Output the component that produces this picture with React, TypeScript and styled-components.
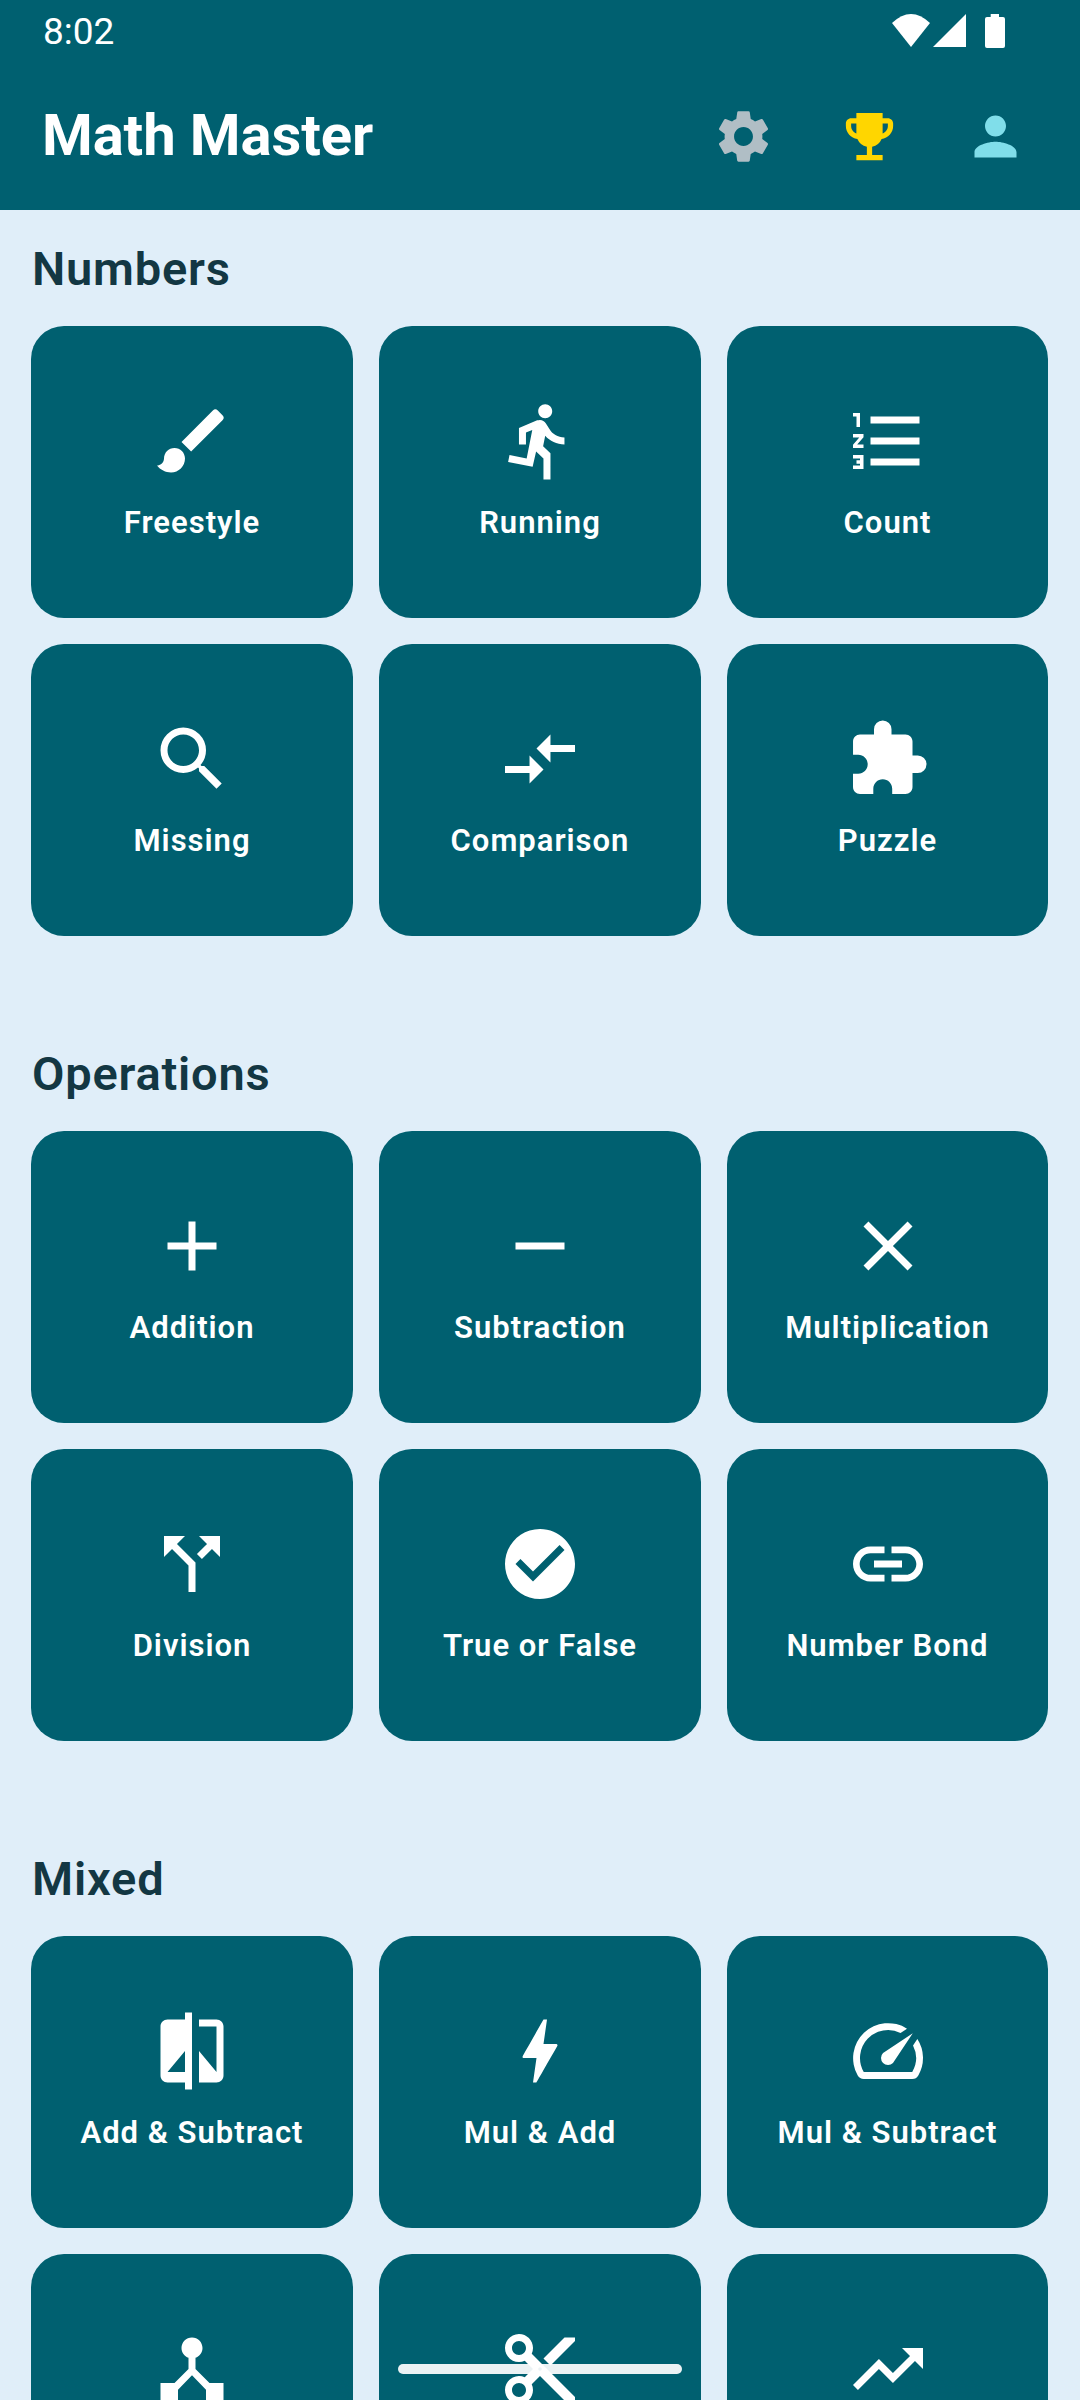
import React from "react";
import styled, { createGlobalStyle } from "styled-components";
import {
  MdBrush, MdDirectionsRun, MdFormatListNumbered, MdSearch, MdCompareArrows, MdExtension,
  MdAdd, MdRemove, MdClose, MdCallSplit, MdCheckCircle, MdLink, MdCompare, MdBolt, MdSpeed,
  MdDeviceHub, MdContentCut, MdTrendingUp, MdSettings, MdEmojiEvents, MdPerson,
} from "react-icons/md";
import type { IconType } from "react-icons";

const Global = createGlobalStyle`
  html, body { margin: 0; padding: 0; background: #e0eef9; }
  #root { height: 2400px; overflow: hidden; }
  * { box-sizing: border-box; }
`;

const Page = styled.div`
  width: 1080px;
  height: 2400px;
  overflow: hidden;
  background: #e0eef9;
  font-family: Roboto, "Liberation Sans", sans-serif;
`;

const Header = styled.header`
  background: #006070;
  height: 210px;
  display: flex;
  flex-direction: column;
`;

const StatusBar = styled.div`
  height: 63px;
  display: flex;
  align-items: center;
  justify-content: space-between;
  padding: 0 73px 1px 43px;
  color: #fff;
`;

const Time = styled.span`
  font-size: 37px;
  font-weight: 400;
`;

const StatusIcons = styled.svg`
  width: 117px;
  height: 36px;
  fill: #fff;
  display: block;
`;

const Toolbar = styled.div`
  flex: 1;
  display: flex;
  align-items: center;
  justify-content: space-between;
  padding: 0 21.5px 3px 42px;
`;

const AppTitle = styled.h1`
  margin: 0;
  color: #fff;
  font-size: 58px;
  font-weight: 700;
  line-height: 1;
  letter-spacing: -0.1px;
`;

const Actions = styled.div`
  display: flex;
  margin-top: 3px;
`;

const ActionButton = styled.span<{ $color: string }>`
  width: 126px;
  height: 126px;
  display: flex;
  align-items: center;
  justify-content: center;
  color: ${(p) => p.$color};
  font-size: 63px;
`;

const Main = styled.main`
  padding: 0 32px 0 31px;
`;

const Section = styled.section`
  margin-bottom: 79px;
`;

const SectionTitle = styled.h2`
  margin: 0;
  padding: 32px 1px 30px;
  height: 116px;
  font-size: 47px;
  line-height: 54px;
  font-weight: 600;
  letter-spacing: 0.8px;
  color: #133743;
`;

const Grid = styled.div`
  display: grid;
  grid-template-columns: 322px 322px 321px;
  gap: 26px;
`;

const Card = styled.div`
  height: 292px;
  padding-top: 3px;
  border-radius: 33px;
  background: #006070;
  color: #fff;
  display: flex;
  flex-direction: column;
  align-items: center;
  justify-content: center;
  gap: 14px;
`;

const IconWrap = styled.div`
  position: relative;
  width: 84px;
  height: 84px;
  font-size: 84px;
  display: flex;
  align-items: center;
  justify-content: center;
`;

const Strike = styled.span`
  position: absolute;
  left: 50%;
  top: 50%;
  width: 284px;
  height: 10px;
  transform: translate(-50%, -50%);
  border-radius: 5px;
  background: rgba(255, 255, 255, 0.92);
`;

const Label = styled.span`
  display: block;
  min-height: 52px;
  font-size: 31px;
  line-height: 52px;
  font-weight: 600;
  letter-spacing: 1px;
  white-space: nowrap;
`;

type Item = { label?: string; icon: IconType; strike?: boolean };

const sections: { title: string; items: Item[] }[] = [
  {
    title: "Numbers",
    items: [
      { label: "Freestyle", icon: MdBrush },
      { label: "Running", icon: MdDirectionsRun },
      { label: "Count", icon: MdFormatListNumbered },
      { label: "Missing", icon: MdSearch },
      { label: "Comparison", icon: MdCompareArrows },
      { label: "Puzzle", icon: MdExtension },
    ],
  },
  {
    title: "Operations",
    items: [
      { label: "Addition", icon: MdAdd },
      { label: "Subtraction", icon: MdRemove },
      { label: "Multiplication", icon: MdClose },
      { label: "Division", icon: MdCallSplit },
      { label: "True or False", icon: MdCheckCircle },
      { label: "Number Bond", icon: MdLink },
    ],
  },
  {
    title: "Mixed",
    items: [
      { label: "Add & Subtract", icon: MdCompare },
      { label: "Mul & Add", icon: MdBolt },
      { label: "Mul & Subtract", icon: MdSpeed },
      { icon: MdDeviceHub },
      { icon: MdContentCut, strike: true },
      { icon: MdTrendingUp },
    ],
  },
];

export default function App() {
  return (
    <Page>
      <Global />
      <Header>
        <StatusBar>
          <Time>8:02</Time>
          <StatusIcons viewBox="0 0 117 36">
            <path d="M2 10 Q21 -8 40 10 L21 34 Z" />
            <path d="M76 1 V34 H43 Z" />
            <path d="M95 6 a2 2 0 0 1 2 -2 h3.7 v-3 h8.3 v3 h4 a2 2 0 0 1 2 2 v27 a2 2 0 0 1 -2 2 h-16 a2 2 0 0 1 -2 -2 Z" />
          </StatusIcons>
        </StatusBar>
        <Toolbar>
          <AppTitle>Math Master</AppTitle>
          <Actions>
            <ActionButton $color="#b0bec5"><MdSettings /></ActionButton>
            <ActionButton $color="#ffd600"><MdEmojiEvents /></ActionButton>
            <ActionButton $color="#80deea"><MdPerson /></ActionButton>
          </Actions>
        </Toolbar>
      </Header>
      <Main>
        {sections.map((s) => (
          <Section key={s.title}>
            <SectionTitle>{s.title}</SectionTitle>
            <Grid>
              {s.items.map((it, i) => (
                <Card key={i}>
                  <IconWrap>
                    <it.icon />
                    {it.strike && <Strike />}
                  </IconWrap>
                  <Label>{it.label}</Label>
                </Card>
              ))}
            </Grid>
          </Section>
        ))}
      </Main>
    </Page>
  );
}
